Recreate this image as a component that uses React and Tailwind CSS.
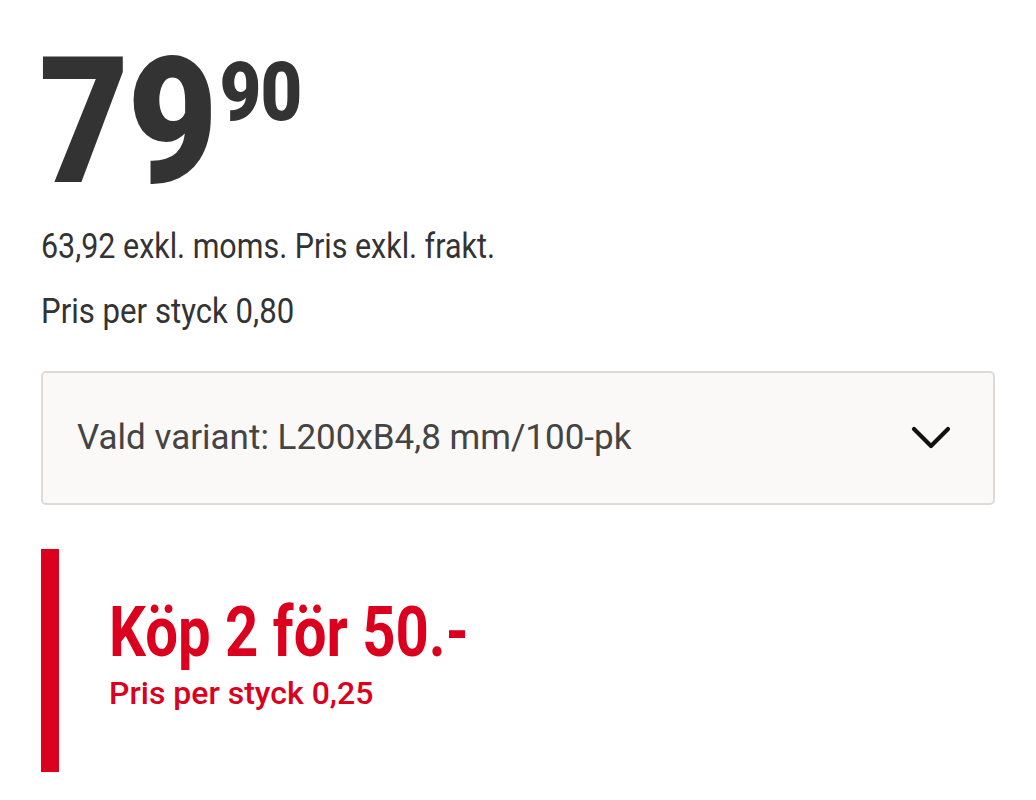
import React from 'react';

const Chevron = () => (
  <svg width="40" height="26" viewBox="0 0 40 26" fill="none">
    <path d="M3 4 L20 21 L37 4" stroke="#111" strokeWidth="4.2" strokeLinecap="round" strokeLinejoin="round" />
  </svg>
);

const App = () => {
  return (
    <div className="min-h-screen bg-white px-[41px] pt-[33px] font-['Roboto',sans-serif]">
      {/* PRIS */}
      <div className="flex items-start text-[#333] origin-left scale-x-[0.88] -ml-[2px]">
        <span className="text-[177px] font-black leading-none tracking-[-2px]">79</span>
        <span className="text-[82px] font-black leading-none mt-[18px] ml-[4px] tracking-[-1px]">90</span>
      </div>

      <p className="mt-[17px] text-[35px] leading-[40px] text-[#333] origin-left scale-x-[0.87]">
        63,92 exkl. moms. Pris exkl. frakt.
      </p>
      <p className="mt-[25px] text-[35px] leading-[40px] text-[#333] origin-left scale-x-[0.89]">
        Pris per styck 0,80
      </p>

      {/* VARIANT */}
      <div className="mt-[39px] h-[134px] bg-[#faf9f7] border-2 border-[#dedbd6] rounded-[5px] flex items-center justify-between pl-[34px] pr-[42px]">
        <span className="text-[35px] text-[#444]">Vald variant: L200xB4,8 mm/100-pk</span>
        <Chevron />
      </div>

      {/* KAMPANJ */}
      <div className="mt-[44px] flex">
        <div className="w-[18px] bg-[#da001e] shrink-0" />
        <div className="pl-[50px] pt-[48px] pb-[63px] text-[#da001e]">
          <div className="text-[70px] font-bold leading-none origin-left scale-x-[0.83] whitespace-nowrap">
            Köp 2 för 50.-
          </div>
          <div className="mt-[10px] text-[32px] font-medium leading-none">Pris per styck 0,25</div>
        </div>
      </div>
    </div>
  );
};

export default App;
